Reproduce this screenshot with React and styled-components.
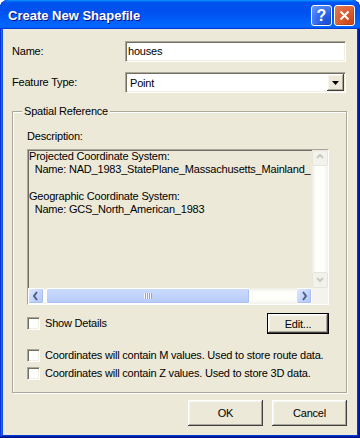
import React from 'react';
import styled, { createGlobalStyle, css } from 'styled-components';

const Global = createGlobalStyle`
  html, body { margin: 0; padding: 0; background: #fff; }
  body {
    font-family: "Liberation Sans", Arial, sans-serif;
    font-size: 11px;
    letter-spacing: -0.2px;
    color: #000;
  }
  * { box-sizing: border-box; }
`;

const sunken = css`
  border: 1px solid;
  border-color: #aca899 #fff #fff #aca899;
  box-shadow: inset 1px 1px #716f64, inset -1px -1px #f1efe2;
`;

const raised = css`
  background: #ece9d8;
  box-shadow: inset -1px -1px #404040, inset 1px 1px #fff, inset -2px -2px #aca899, inset 2px 2px #f7f6f0;
`;

const Window = styled.div`
  width: 360px;
  height: 438px;
  display: flex;
  flex-direction: column;
  background: #0831d9;
  border-radius: 8px 8px 0 0;
  overflow: hidden;
  box-shadow: inset -1px -1px #00138c, inset 1px 1px #0831d9, inset -2px -2px #001ea0,
    inset 2px 2px #166aee, inset -3px -3px #003bda, inset 3px 3px #0855dd;
`;

const TitleBar = styled.div`
  height: 29px;
  flex: none;
  display: flex;
  align-items: center;
  padding: 0 5px 0 8px;
  border-radius: 8px 8px 0 0;
  background: linear-gradient(180deg, #0997ff, #0053ee 8%, #0050ee 40%, #06f 88%, #06f 93%, #005bff 95%, #003dd7 96%, #003dd7);
`;

const Title = styled.div`
  flex: 1;
  color: #fff;
  font-weight: bold;
  font-size: 13px;
  letter-spacing: 0;
  text-shadow: 1px 1px #0f1089;
  margin-top: 1px;
`;

const Controls = styled.div`
  display: flex;
  gap: 2px;
  margin-top: 2px;
`;

const CtrlButton = styled.div`
  width: 21px;
  height: 21px;
  border: 1px solid #fff;
  border-radius: 3px;
  display: grid;
  place-items: center;
  color: #fff;
  font-weight: bold;
  font-size: 16px;
  letter-spacing: 0;
  background: ${p => p.$kind === 'close'
    ? 'radial-gradient(circle at 80% 85%, #cc4619 0%, #d95a2c 40%, #e37a55 100%)'
    : 'radial-gradient(circle at 80% 85%, #1b4fd4 0%, #2c64e8 40%, #6a9cff 100%)'};
  box-shadow: inset -1px -1px rgba(0,0,0,0.15);
`;

const Body = styled.div`
  flex: 1;
  margin: 0 3px 3px;
  background: #ece9d8;
  padding: 12px 10px 9px 9px;
  display: flex;
  flex-direction: column;
`;

const FieldRow = styled.div`
  display: grid;
  grid-template-columns: 113px 221px;
  align-items: center;
  height: 21px;
  & + & { margin-top: 10px; }
`;

const Label = styled.span`
  white-space: nowrap;
  line-height: 13px;
`;

const TextInput = styled.div`
  ${sunken};
  height: 21px;
  background: #fff;
  display: flex;
  align-items: center;
  padding: 0 0 1px 2px;
`;

const Select = styled.div`
  ${sunken};
  height: 21px;
  background: #fff;
  display: flex;
  align-items: center;
  padding: 1px 1px 1px 4px;
`;

const SelectValue = styled.span`
  flex: 1;
`;

const DropButton = styled.div`
  ${raised};
  width: 17px;
  height: 17px;
  display: grid;
  place-items: center;
`;

const Group = styled.div`
  position: relative;
  margin-top: 18px;
  border: 1px solid #aca899;
  box-shadow: inset 1px 1px #fff, 1px 1px #fff;
  padding: 18px 17px 12px 14px;
  display: flex;
  flex-direction: column;
`;

const Legend = styled.span`
  position: absolute;
  top: -7px;
  left: 9px;
  padding: 0 2px;
  line-height: 13px;
  background: #ece9d8;
`;

const TextBox = styled.div`
  ${sunken};
  margin-top: 6px;
  height: 156px;
  background: #ece9d8;
  display: grid;
  grid-template-columns: 1fr 16px;
  grid-template-rows: 1fr 16px;
  overflow: hidden;
`;

const TextContent = styled.div`
  white-space: pre;
  overflow: hidden;
  line-height: 13.3px;
  padding: 0 0 0 1px;
`;

const VScroll = styled.div`
  grid-column: 2;
  grid-row: 1;
  display: flex;
  flex-direction: column;
  justify-content: space-between;
  background: linear-gradient(to right, #eeede5, #fefefb 25%, #fefefb 75%, #f3f1ec);
`;

const HScroll = styled.div`
  grid-column: 1;
  grid-row: 2;
  display: flex;
  align-items: stretch;
  background: linear-gradient(to bottom, #eeede5, #fefefb 25%, #fefefb 75%, #f3f1ec);
`;

const Corner = styled.div`
  grid-column: 2;
  grid-row: 2;
  background: #f4f3ee;
`;

const ArrowBtn = styled.div`
  width: 16px;
  height: 16px;
  flex: none;
  display: grid;
  place-items: center;
  border-radius: 2px;
  ${p => p.$disabled ? css`
    background: #f3f2ec;
    border: 1px solid #e6e5dc;
  ` : css`
    background: linear-gradient(135deg, #dde7fe, #c3d4fc 55%, #b1c6f7);
    border: 1px solid #fff;
    box-shadow: inset -1px -1px #a9bff3;
  `}
`;

const Thumb = styled.div`
  width: 204px;
  margin-left: 2px;
  border-radius: 2px;
  border: 1px solid #fff;
  background: linear-gradient(to bottom, #cadafd, #c1d3fb 50%, #b7cbf8);
  box-shadow: inset -1px -1px #a9bff3;
  display: grid;
  place-items: center;
`;

const Grip = styled.span`
  width: 8px;
  height: 6px;
  background: repeating-linear-gradient(to right, #eef3ff 0 1px, #8ca7e4 1px 2px);
`;

const Spacer = styled.div`
  flex: 1;
`;

const DetailsRow = styled.div`
  margin-top: 8px;
  height: 21px;
  display: flex;
  align-items: center;
  justify-content: space-between;
`;

const CheckRow = styled.label`
  display: flex;
  align-items: center;
  gap: 5px;
  height: 13px;
  line-height: 13px;
  white-space: nowrap;
`;

const Checkbox = styled.span`
  ${sunken};
  width: 13px;
  height: 13px;
  flex: none;
  background: #fff;
`;

const Options = styled.div`
  margin-top: 15px;
  display: flex;
  flex-direction: column;
  gap: 5px;
`;

const PushButton = styled.div`
  ${raised};
  width: ${p => p.$w}px;
  height: ${p => p.$h}px;
  display: grid;
  place-items: center;
  ${p => p.$default && css`
    border: 1px solid #000;
  `}
`;

const ButtonRow = styled.div`
  margin-top: 7px;
  display: flex;
  justify-content: flex-end;
  gap: 9px;
`;

const Chevron = ({ dir, color }) => {
  const pts = {
    up: '4,7 7,4 10,7',
    down: '4,5 7,8 10,5',
    left: '8,3 5,7 8,11',
    right: '6,3 9,7 6,11',
  }[dir];
  return (
    <svg width="14" height="14" viewBox="0 0 14 14">
      <polyline points={pts} fill="none" stroke={color} strokeWidth="2" />
    </svg>
  );
};

export default function App() {
  return (
    <>
      <Global />
      <Window>
        <TitleBar>
          <Title>Create New Shapefile</Title>
          <Controls>
            <CtrlButton $kind="help">?</CtrlButton>
            <CtrlButton $kind="close">
              <svg width="11" height="11" viewBox="0 0 11 11">
                <path d="M1.5 1.5 L9.5 9.5 M9.5 1.5 L1.5 9.5" stroke="#fff" strokeWidth="2" />
              </svg>
            </CtrlButton>
          </Controls>
        </TitleBar>
        <Body>
          <FieldRow>
            <Label>Name:</Label>
            <TextInput>houses</TextInput>
          </FieldRow>
          <FieldRow>
            <Label>Feature Type:</Label>
            <Select>
              <SelectValue>Point</SelectValue>
              <DropButton>
                <svg width="7" height="4" viewBox="0 0 7 4">
                  <polygon points="0,0 7,0 3.5,4" fill="#000" />
                </svg>
              </DropButton>
            </Select>
          </FieldRow>
          <Group>
            <Legend>Spatial Reference</Legend>
            <Label>Description:</Label>
            <TextBox>
              <TextContent>{`Projected Coordinate System:
  Name: NAD_1983_StatePlane_Massachusetts_Mainland_

Geographic Coordinate System:
  Name: GCS_North_American_1983`}</TextContent>
              <VScroll>
                <ArrowBtn $disabled><Chevron dir="up" color="#cbc9bc" /></ArrowBtn>
                <ArrowBtn $disabled><Chevron dir="down" color="#cbc9bc" /></ArrowBtn>
              </VScroll>
              <HScroll>
                <ArrowBtn><Chevron dir="left" color="#4d6185" /></ArrowBtn>
                <Thumb><Grip /></Thumb>
                <Spacer />
                <ArrowBtn><Chevron dir="right" color="#4d6185" /></ArrowBtn>
              </HScroll>
              <Corner />
            </TextBox>
            <DetailsRow>
              <CheckRow><Checkbox />Show Details</CheckRow>
              <PushButton $w={62} $h={21} $default>Edit...</PushButton>
            </DetailsRow>
            <Options>
              <CheckRow><Checkbox />Coordinates will contain M values. Used to store route data.</CheckRow>
              <CheckRow><Checkbox />Coordinates will contain Z values. Used to store 3D data.</CheckRow>
            </Options>
          </Group>
          <ButtonRow>
            <PushButton $w={75} $h={26}>OK</PushButton>
            <PushButton $w={75} $h={26}>Cancel</PushButton>
          </ButtonRow>
        </Body>
      </Window>
    </>
  );
}
